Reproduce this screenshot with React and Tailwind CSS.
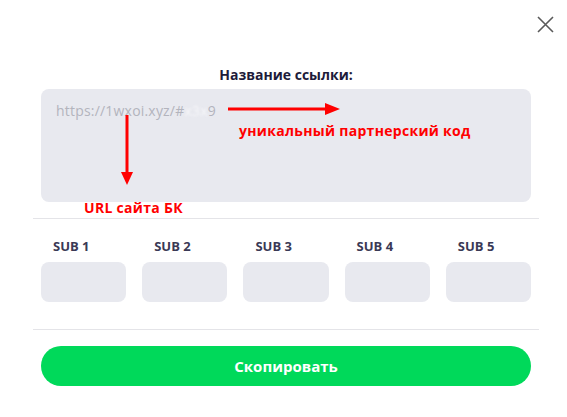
import { useState } from 'react';

const SUBS = ['SUB 1', 'SUB 2', 'SUB 3', 'SUB 4', 'SUB 5'];

function CloseIcon() {
    return (
        <svg width="17" height="17" viewBox="0 0 17 17" className="text-[#5a5a5a]">
            <path d="M1 1L16 16M16 1L1 16" stroke="currentColor" strokeWidth="1.6" />
        </svg>
    );
}

export default function App() {
    const [subs, setSubs] = useState(['', '', '', '', '']);

    return (
        <div className="relative h-[417px] w-[567px] bg-white font-['Open_Sans',sans-serif]">
            <button className="absolute right-[13px] top-[16px]">
                <CloseIcon />
            </button>

            <div className="pl-[33px] pr-[28px] pt-[64px]">
                <h3 className="text-center text-[14px] font-bold leading-[22px] text-[#1d1b3a]">Название ссылки:</h3>

                <div className="relative mx-2 mt-[3px] h-[113px] rounded-lg bg-[#e8e9ef] px-[15px] pt-[9px]">
                    <span className="text-[14px] leading-5 tracking-[0.2px] text-[#b3b4bd]">
                        https://1wxoi.xyz/#<span className="text-[#f6f6f9] blur-[1px]">x3x</span>9
                    </span>

                    {/* annotations */}
                    <svg className="absolute left-0 top-0" width="490" height="113">
                        <line x1="187" y1="20" x2="287" y2="20" stroke="#ff0000" strokeWidth="3" />
                        <polygon points="284,14 299,20 284,26" fill="#ff0000" />
                        <line x1="86" y1="26" x2="86" y2="86" stroke="#ff0000" strokeWidth="3" />
                        <polygon points="80,83 86,96 92,83" fill="#ff0000" />
                    </svg>
                    <span className="absolute left-[198px] top-[32px] text-[14px] font-bold leading-5 tracking-[0.3px] text-[#ff0000]">уникальный партнерский код</span>
                    <span className="absolute left-[43px] top-[109px] text-[14px] font-bold leading-5 tracking-[0.3px] text-[#ff0000]">URL сайта БК</span>
                </div>

                <div className="mt-[16px] border-t border-[#e4e4e8]" />

                <div className="mx-2 mt-[17px] grid grid-cols-5 gap-4">
                    {SUBS.map((s, i) => (
                        <div key={s}>
                            <div className="pl-3 text-[13px] font-bold leading-5 text-[#3a3955]">{s}</div>
                            <input
                                value={subs[i]}
                                onChange={(e) => setSubs(subs.map((v, j) => (j === i ? e.target.value : v)))}
                                className="mt-[6px] h-10 w-full rounded-lg bg-[#e8e9ef] outline-none"
                            />
                        </div>
                    ))}
                </div>

                <div className="mt-[27px] border-t border-[#e4e4e8]" />

                <button className="mx-2 mt-[16px] h-10 w-[490px] rounded-full bg-[#00d95a] text-[15px] font-bold text-white">
                    Скопировать
                </button>
            </div>
        </div>
    );
}
